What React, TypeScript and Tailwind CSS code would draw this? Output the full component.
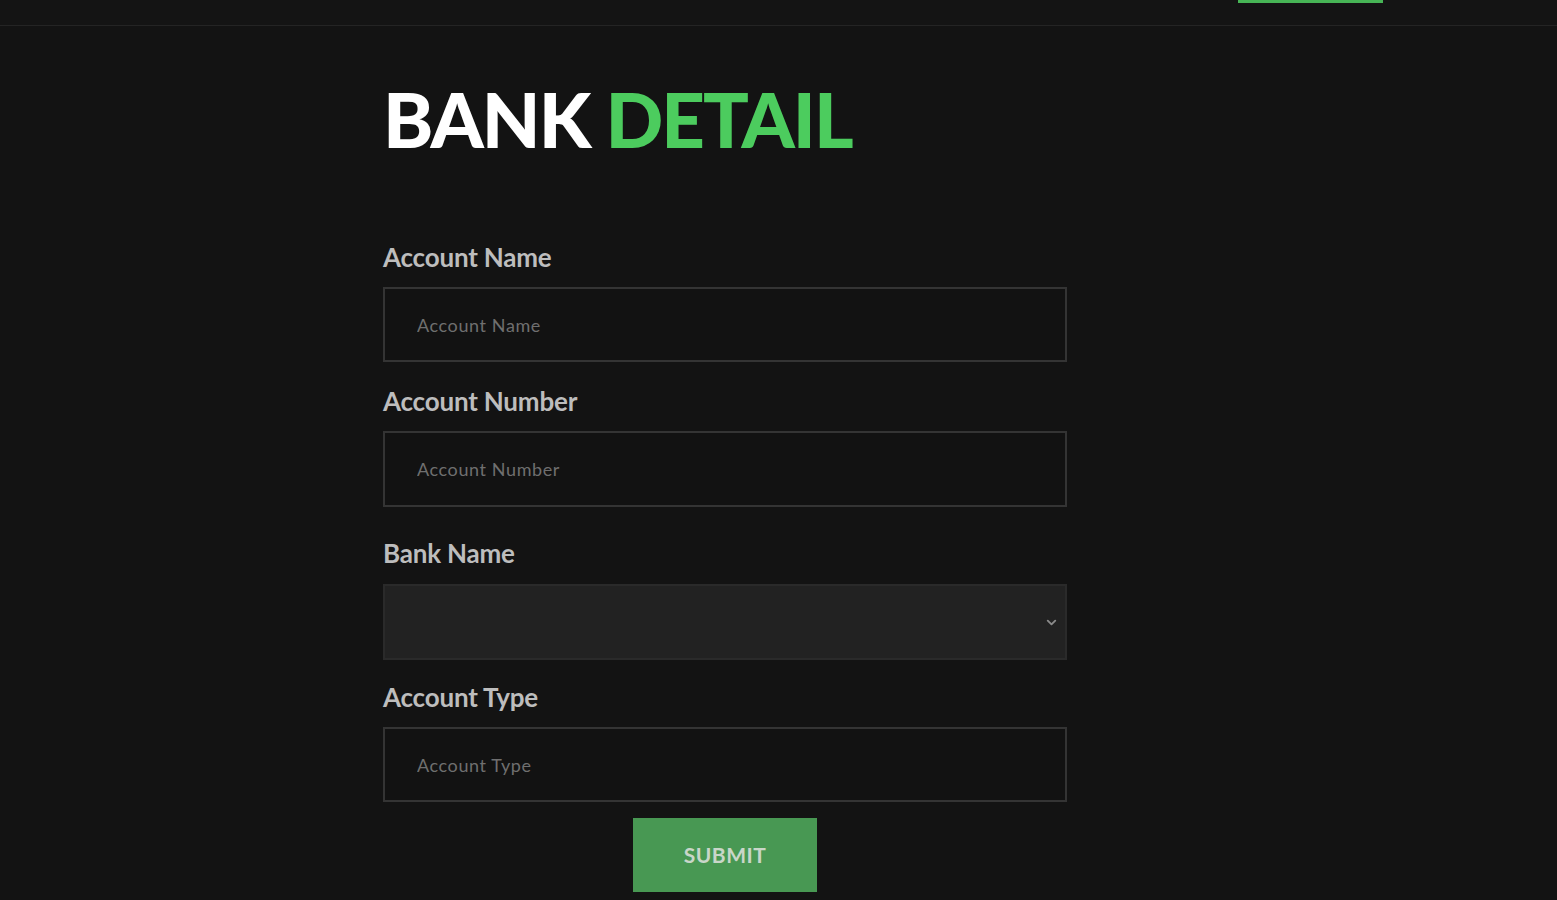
import { ChevronDown } from 'lucide-react'

const font = { fontFamily: 'Lato, "Open Sans", sans-serif' }

const labelCls = 'block text-[26px] font-bold leading-[30px] text-[#bdbdbd] tracking-[-0.2px]'

function Field({ label, placeholder, className, height = 'h-[74px]' }: { label: string; placeholder: string; className?: string; height?: string }) {
  return (
    <div className={className}>
      <label className={labelCls}>{label}</label>
      <input
        placeholder={placeholder}
        className={`mt-[15px] block ${height} w-full border-2 border-[#343434] bg-[#121212] px-[32px] text-[18px] tracking-[0.6px] text-[#888] placeholder:text-[#6f6f6f] outline-none`}
      />
    </div>
  )
}

export default function App() {
  return (
    <div className="min-h-[900px] w-full bg-[#131313] text-white" style={font}>
      <header className="flex h-[26px] justify-end border-b border-[#242424] bg-[#141414] pr-[174px]">
        <div className="h-[3px] w-[145px] bg-[#47b556]" />
      </header>

      <main className="ml-[383px] w-[684px] pt-[48px]">
        <h1 className="text-[76px] font-black leading-[90px] tracking-[-2px]">
          <span className="text-white">BANK </span>
          <span className="text-[#4ccc5e]">DETAIL</span>
        </h1>

        <Field label="Account Name" placeholder="Account Name" className="mt-[78px]" height="h-[75px]" />
        <Field label="Account Number" placeholder="Account Number" className="mt-[24px]" height="h-[76px]" />

        <div className="mt-[31px]">
          <label className={labelCls}>Bank Name</label>
          <div className="relative mt-[16px] h-[76px] w-full border-2 border-[#2a2a2a] bg-[#222222]">
            <ChevronDown className="absolute right-[6px] top-[29px] text-[#8a8a8a]" size={15} strokeWidth={3} />
          </div>
        </div>

        <Field label="Account Type" placeholder="Account Type" className="mt-[22px]" height="h-[75px]" />

        <div className="flex justify-center pt-[16px]">
          <button className="h-[74px] w-[184px] bg-[#489853] text-[21px] font-bold tracking-[0.5px] text-[#c9d6c9]">SUBMIT</button>
        </div>
      </main>
    </div>
  )
}
